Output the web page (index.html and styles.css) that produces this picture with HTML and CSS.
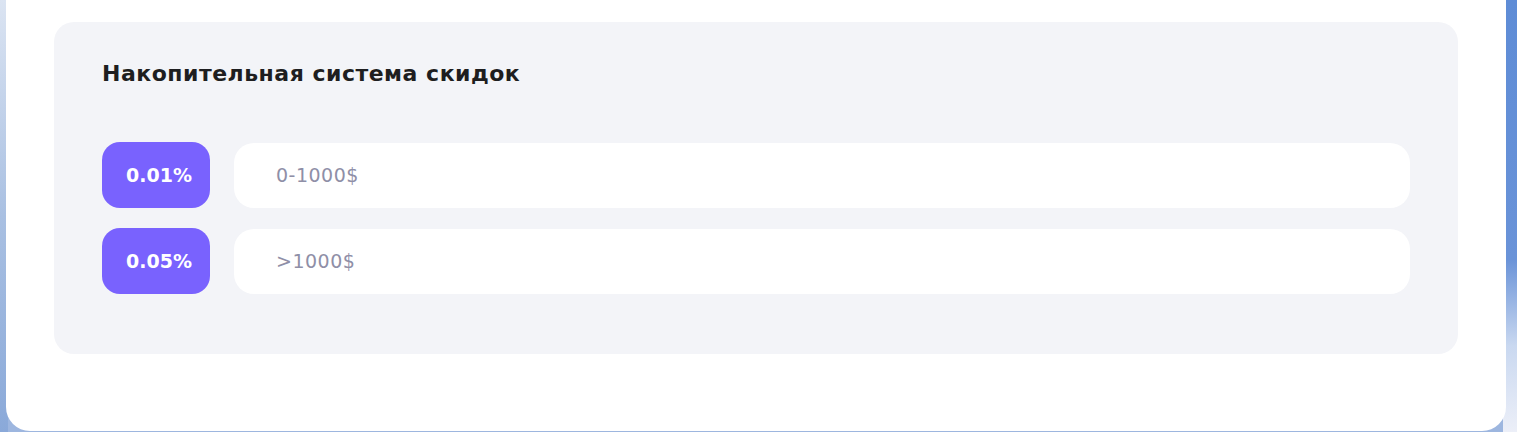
FILE: index.html
```html
<!DOCTYPE html>
<html lang="ru">
<head>
<meta charset="utf-8">
<link rel="stylesheet" href="styles.css">
</head>
<body>
<div class="card">
  <section class="panel">
    <h2 class="title">Накопительная система скидок</h2>
    <div class="rows">
      <div class="row">
        <div class="badge">0.01%</div>
        <div class="field">0-1000$</div>
      </div>
      <div class="row">
        <div class="badge">0.05%</div>
        <div class="field">&gt;1000$</div>
      </div>
    </div>
  </section>
</div>
</body>
</html>
```
FILE: styles.css
```css
html, body {
  margin: 0;
  height: 432px;
  overflow: hidden;
}
body {
  background:
    linear-gradient(to bottom, #dbe4f2 0%, #a9c0e2 50%, #8aa9d9 100%) left top / 8px 100% no-repeat,
    linear-gradient(to bottom, #5e8cd6 0%, #6a93d8 60%, #c9d8f0 80%, #eceff8 100%) right top / 14px 100% no-repeat,
    #9db6df;
  font-family: "DejaVu Sans", sans-serif;
}
.card {
  box-sizing: border-box;
  margin: 0 11px 0 6px;
  height: 431px;
  background: #ffffff;
  border-radius: 0 0 24px 24px;
  padding: 22px 48px 0 48px;
}
.panel {
  background: #f3f4f8;
  border-radius: 20px;
  padding: 38px 48px 60px 48px;
}
.title {
  margin: 0;
  font-size: 22px;
  font-weight: 600;
  letter-spacing: 0.5px;
  color: #1e1e20;
  line-height: 28px;
}
.rows {
  margin-top: 54px;
  display: flex;
  flex-direction: column;
  gap: 20px;
}
.row {
  display: flex;
  align-items: flex-end;
  gap: 24px;
}
.badge {
  width: 108px;
  height: 66px;
  border-radius: 18px;
  background: #7962fe;
  color: #ffffff;
  font-weight: 700;
  font-size: 19px;
  display: flex;
  align-items: center;
  justify-content: center;
  padding-left: 6px;
  box-sizing: border-box;
}
.field {
  flex: 1;
  height: 65px;
  border-radius: 20px;
  background: #ffffff;
  display: flex;
  align-items: center;
  padding-left: 42px;
  padding-bottom: 2px;
  box-sizing: border-box;
  font-size: 19px;
  letter-spacing: 0.5px;
  color: #8f8fa7;
}
```
